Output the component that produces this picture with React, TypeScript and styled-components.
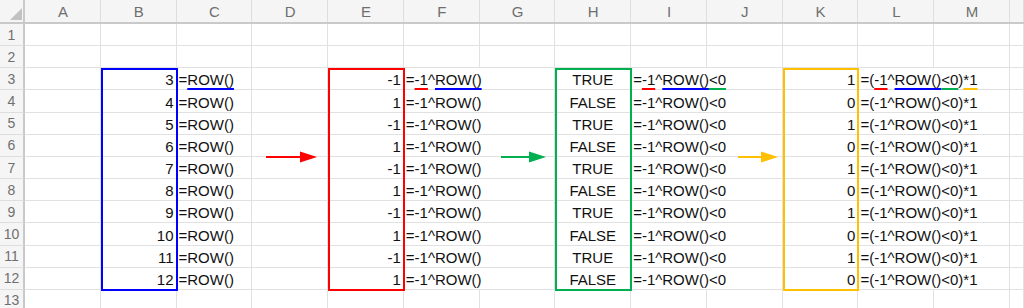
import React from "react"
import styled, { createGlobalStyle } from "styled-components"

// Excel-ish grid: 25px row header, 13 visible columns, then the cut-off N column
const COL_W = 75.77
const ROW_H = 22.17
const LETTERS = ["A", "B", "C", "D", "E", "F", "G", "H", "I", "J", "K", "L", "M", ""]
const ROWS = Array.from({ length: 13 }, (_, i) => i + 1)

const RED = "#ff0000"
const BLUE = "#0000ff"
const GREEN = "#00b050"
const GOLD = "#ffc000"

const GlobalStyle = createGlobalStyle`
  html, body {
    margin: 0;
    padding: 0;
    background: #ffffff;
  }
  body {
    font-family: "Liberation Sans", Arial, sans-serif;
    overflow: hidden;
  }
`

const Sheet = styled.div`
  display: grid;
  grid-template-columns: 25px repeat(13, ${COL_W}px) 1fr;
  grid-template-rows: 24px repeat(13, ${ROW_H}px);
  width: 1024px;
  height: 308px;
  overflow: hidden;
  background: #ffffff;
`

const Corner = styled.div`
  grid-row: 1;
  grid-column: 1;
  display: flex;
  justify-content: flex-end;
  align-items: flex-end;
  padding: 0 1px 2px 0;
  background: #f5f5f5;
  border-right: 2px solid #c9c9c9;
  border-bottom: 2px solid #c9c9c9;

  &::after {
    content: "";
    width: 0;
    height: 0;
    border-left: 12px solid transparent;
    border-bottom: 12px solid #c2c2c2;
  }
`

const ColHead = styled.div<{ $col: number }>`
  grid-row: 1;
  grid-column: ${(p) => p.$col};
  display: flex;
  align-items: center;
  justify-content: center;
  background: #f5f5f5;
  border-bottom: 2px solid #c9c9c9;
  box-shadow: inset -1px 0 0 #dedede;
  color: #6f6f6f;
  font-size: 15px;
`

const RowHead = styled.div<{ $row: number }>`
  grid-row: ${(p) => p.$row};
  grid-column: 1;
  display: flex;
  align-items: center;
  justify-content: center;
  background: #f5f5f5;
  border-right: 2px solid #c9c9c9;
  border-bottom: 1px solid #dedede;
  color: #6f6f6f;
  font-size: 14px;
`

const Cell = styled.div<{ $row: number; $col: number; $span?: number; $align?: string }>`
  grid-row: ${(p) => p.$row};
  grid-column: ${(p) => p.$col} / span ${(p) => p.$span ?? 1};
  display: flex;
  align-items: flex-end;
  justify-content: ${(p) => p.$align ?? "flex-start"};
  padding: 0 2px;
  border-right: 1px solid #e1e1e1;
  border-bottom: 1px solid #e1e1e1;
  color: #111111;
  font-size: 15px;
  line-height: 18px;
  white-space: nowrap;
  min-width: 0;
`

const Mark = styled.span<{ $c: string }>`
  text-decoration-line: underline;
  text-decoration-color: ${(p) => p.$c};
  text-decoration-thickness: 2px;
  text-underline-offset: 3px;
`

const Outline = styled.div<{ $col: number; $c: string }>`
  grid-row: 4 / 14;
  grid-column: ${(p) => p.$col};
  margin: 0 -1px -1px 0;
  border: 2px solid ${(p) => p.$c};
  z-index: 2;
  pointer-events: none;
`

const ArrowSlot = styled.div<{ $col: number; $offset: number }>`
  grid-row: 7 / 9;
  grid-column: ${(p) => p.$col};
  align-self: center;
  display: flex;
  padding-left: ${(p) => p.$offset}px;
  z-index: 2;
`

function Arrow({ col, offset, width, color }: { col: number; offset: number; width: number; color: string }) {
  const head = 17
  return (
    <ArrowSlot $col={col} $offset={offset}>
      <svg width={width} height={12} viewBox={`0 0 ${width} 12`}>
        <line x1={0} y1={6} x2={width - head + 1} y2={6} stroke={color} strokeWidth={2} />
        <polygon points={`${width - head},0.5 ${width},6 ${width - head},11.5`} fill={color} />
      </svg>
    </ArrowSlot>
  )
}

// column indexes in the grid (1 = row header)
const C = { A: 2, B: 3, C: 4, D: 5, E: 6, F: 7, G: 8, H: 9, I: 10, J: 11, K: 12, L: 13, M: 14, N: 15 }

function DataRow({ r }: { r: number }) {
  const row = r + 1
  const odd = r % 2 === 1
  const first = r === 3
  return (
    <>
      <Cell $row={row} $col={C.A} />
      <Cell $row={row} $col={C.B} $align="flex-end">{r}</Cell>
      <Cell $row={row} $col={C.C}>
        {first ? <>=<Mark $c={BLUE}>ROW()</Mark></> : "=ROW()"}
      </Cell>
      <Cell $row={row} $col={C.D} />
      <Cell $row={row} $col={C.E} $align="flex-end">{odd ? -1 : 1}</Cell>
      <Cell $row={row} $col={C.F} $span={2}>
        {first ? (
          <>=<Mark $c={RED}>-1</Mark>^<Mark $c={BLUE}>ROW()</Mark></>
        ) : "=-1^ROW()"}
      </Cell>
      <Cell $row={row} $col={C.H} $align="center">{odd ? "TRUE" : "FALSE"}</Cell>
      <Cell $row={row} $col={C.I} $span={2}>
        {first ? (
          <>=<Mark $c={RED}>-1</Mark>^<Mark $c={BLUE}>ROW()</Mark><Mark $c={GREEN}>&lt;0</Mark></>
        ) : "=-1^ROW()<0"}
      </Cell>
      <Cell $row={row} $col={C.K} $align="flex-end">{odd ? 1 : 0}</Cell>
      <Cell $row={row} $col={C.L} $span={2}>
        {first ? (
          <>=(<Mark $c={RED}>-1</Mark>^<Mark $c={BLUE}>ROW()</Mark><Mark $c={GREEN}>&lt;0</Mark>)<Mark $c={GOLD}>*1</Mark></>
        ) : "=(-1^ROW()<0)*1"}
      </Cell>
      <Cell $row={row} $col={C.N} />
    </>
  )
}

function EmptyRow({ r }: { r: number }) {
  return (
    <>
      {LETTERS.map((_, i) => (
        <Cell key={i} $row={r + 1} $col={i + 2} />
      ))}
    </>
  )
}

export default function App() {
  return (
    <>
      <GlobalStyle />
      <Sheet>
        <Corner />
        {LETTERS.map((l, i) => (
          <ColHead key={i} $col={i + 2}>{l}</ColHead>
        ))}
        {ROWS.map((r) => (
          <React.Fragment key={r}>
            <RowHead $row={r + 1}>{r}</RowHead>
            {r >= 3 && r <= 12 ? <DataRow r={r} /> : <EmptyRow r={r} />}
          </React.Fragment>
        ))}

        <Outline $col={C.B} $c={BLUE} />
        <Outline $col={C.E} $c={RED} />
        <Outline $col={C.H} $c={GREEN} />
        <Outline $col={C.K} $c={GOLD} />

        <Arrow col={C.D} offset={14} width={51} color={RED} />
        <Arrow col={C.G} offset={21} width={45} color={GREEN} />
        <Arrow col={C.J} offset={31} width={40} color={GOLD} />
      </Sheet>
    </>
  )
}
